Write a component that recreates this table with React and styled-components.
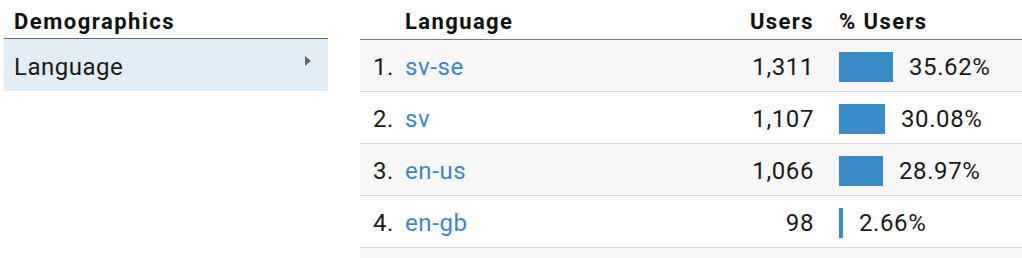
import React from "react";
import styled, { createGlobalStyle } from "styled-components";

const Global = createGlobalStyle`
  html, body { margin: 0; padding: 0; background: #fff; }
  body { font-family: Roboto, "Liberation Sans", Arial, sans-serif; color: #222; }
`;

const Page = styled.div`
  display: flex;
  align-items: flex-start;
  padding-left: 4px;
  gap: 32px;
  width: 1022px;
  box-sizing: border-box;
`;

const SidePanel = styled.div`
  width: 324px;
  flex: none;
`;

const SideHeader = styled.div`
  height: 39px;
  box-sizing: border-box;
  padding: 10px 0 0 10px;
  font-size: 22px;
  line-height: 24px;
  font-weight: 700;
  letter-spacing: 1.5px;
  color: #111;
  border-bottom: 1px solid #6b6b6b;
`;

const SideItem = styled.div`
  height: 52px;
  box-sizing: border-box;
  display: flex;
  align-items: center;
  justify-content: space-between;
  padding: 3px 17px 0 10px;
  background: #e2edf6;
  font-size: 24px;
  letter-spacing: 0.5px;
  color: #1a1a1a;
`;

const Caret = styled.span`
  width: 0;
  height: 0;
  border-top: 5px solid transparent;
  border-bottom: 5px solid transparent;
  border-left: 6px solid #6a6a6a;
  margin-top: -12px;
`;

const Table = styled.div`
  flex: 1;
`;

const Row = styled.div`
  display: grid;
  grid-template-columns: 45px 308px 100px 209px;
  align-items: center;
  box-sizing: border-box;
  height: ${(p) => (p.$head ? "40px" : "52px")};
  padding-top: ${(p) => (p.$head ? "10px" : "3px")};
  background: ${(p) => (p.$shade ? "#f7f7f7" : "#fff")};
  border-bottom: 1px solid ${(p) => (p.$head ? "#7a7a7a" : "#d4d4d4")};
  font-size: ${(p) => (p.$head ? "22px" : "24px")};
  font-weight: ${(p) => (p.$head ? 700 : 400)};
  letter-spacing: ${(p) => (p.$head ? "1.4px" : "0.6px")};
  color: ${(p) => (p.$head ? "#111" : "#1a1a1a")};
  ${(p) => p.$head && "align-items: start; line-height: 24px;"}
`;

const Index = styled.span`
  padding-left: 13px;
`;

const Lang = styled.span`
  color: ${(p) => (p.$link ? "#3f86c0" : "inherit")};
`;

const Users = styled.span`
  text-align: right;
  margin-right: -1px;
`;

const PctCell = styled.div`
  display: flex;
  align-items: center;
  padding-left: 26px;
  gap: 16px;
`;

const Bar = styled.div`
  height: 30px;
  background: #3a8cc6;
  flex: none;
`;

const Footer = styled.div`
  height: 10px;
  background: #f7f7f7;
`;

const rows = [
  { lang: "sv-se", users: "1,311", pct: 35.62 },
  { lang: "sv", users: "1,107", pct: 30.08 },
  { lang: "en-us", users: "1,066", pct: 28.97 },
  { lang: "en-gb", users: "98", pct: 2.66 },
];

export default function App() {
  return (
    <>
      <Global />
      <Page>
        <SidePanel>
          <SideHeader>Demographics</SideHeader>
          <SideItem>
            <span>Language</span>
            <Caret />
          </SideItem>
        </SidePanel>
        <Table>
          <Row $head>
            <span />
            <Lang>Language</Lang>
            <Users>Users</Users>
            <PctCell>% Users</PctCell>
          </Row>
          {rows.map((r, i) => (
            <Row key={r.lang} $shade={i % 2 === 0}>
              <Index>{i + 1}.</Index>
              <Lang $link>{r.lang}</Lang>
              <Users>{r.users}</Users>
              <PctCell>
                <Bar style={{ width: `${Math.max(3, Math.round(r.pct * 1.52))}px` }} />
                <span>{r.pct.toFixed(2)}%</span>
              </PctCell>
            </Row>
          ))}
          <Footer />
        </Table>
      </Page>
    </>
  );
}
